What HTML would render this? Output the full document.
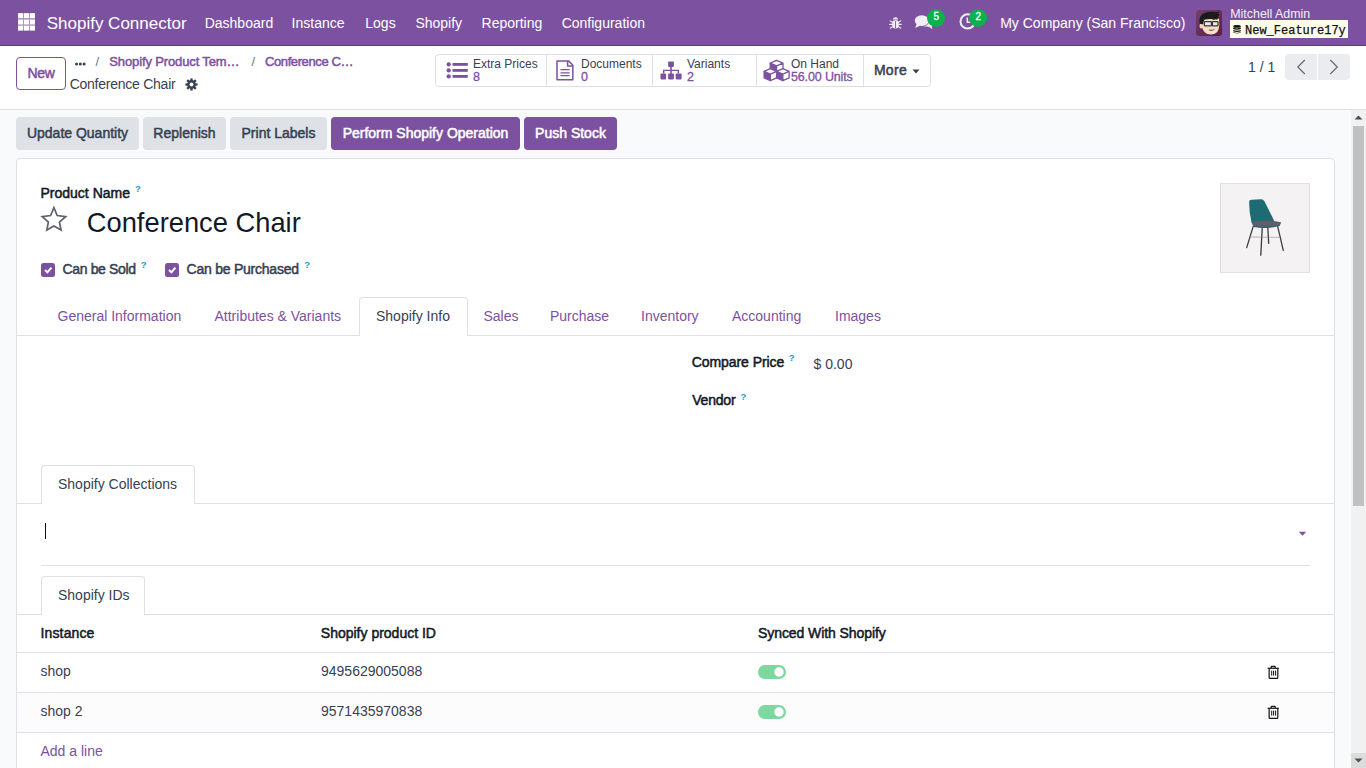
<!DOCTYPE html>
<html><head><meta charset="utf-8">
<style>
*{box-sizing:border-box;margin:0;padding:0}
html,body{width:1366px;height:768px;overflow:hidden;background:#fff;font-family:"Liberation Sans",sans-serif;color:#374151}
.t{position:absolute;line-height:1;white-space:nowrap}
.b{font-weight:bold}
.m{-webkit-text-stroke:0.5px currentColor}
.nav{position:absolute;left:0;top:0;width:1366px;height:46px;background:#7c52a0}
.nav .t{color:#fff}
.cp{position:absolute;left:0;top:46px;width:1366px;height:64px;background:#fff;border-bottom:1px solid #dde1e6}
.content{position:absolute;left:0;top:110px;width:1366px;height:658px;overflow:hidden;background:#f9fafb}
.inner{position:relative;width:1351px;height:1088px}
.pu{color:#7c52a0}
.sup{position:absolute;font-size:9.5px;font-weight:bold;line-height:1;color:#1f96c8}
.btn2{position:absolute;top:7px;height:33px;border-radius:4px;background:#dee2e6}
.btn1{position:absolute;top:7px;height:33px;border-radius:4px;background:#7c52a0}
.card{position:absolute;left:16px;top:48px;width:1319px;height:1100px;background:#fff;border:1px solid #dde1e6;border-radius:4px}
.hl{position:absolute;height:1px;background:#dde1e6}
.vl{position:absolute;width:1px;background:#dde1e6}
</style></head><body>

<!-- NAVBAR -->
<div class="nav">
  <svg style="position:absolute;left:18px;top:13px" width="17" height="18" viewBox="0 0 17 18">
    <rect x="0" y="0.2" width="17" height="17.3" fill="#fff" fill-opacity="0.4"/>
    <g fill="#fff">
      <rect x="0" y="0.2" width="5" height="4.8"/><rect x="6" y="0.2" width="5" height="4.8"/><rect x="12" y="0.2" width="5" height="4.8"/>
      <rect x="0" y="6.6" width="5" height="4.8"/><rect x="6" y="6.6" width="5" height="4.8"/><rect x="12" y="6.6" width="5" height="4.8"/>
      <rect x="0" y="12.8" width="5" height="4.7"/><rect x="6" y="12.8" width="5" height="4.7"/><rect x="12" y="12.8" width="5" height="4.7"/>
    </g>
  </svg>
  <div style="position:absolute;left:0;top:45px;width:1366px;height:1px;background:#603c80"></div>
  <div class="t" style="left:46.7px;top:15px;font-size:17px">Shopify Connector</div>
  <div class="t" style="left:204.7px;top:16.3px;font-size:14px">Dashboard</div>
  <div class="t" style="left:291.6px;top:16.3px;font-size:14px">Instance</div>
  <div class="t" style="left:365.3px;top:16.3px;font-size:14px">Logs</div>
  <div class="t" style="left:415.4px;top:16.3px;font-size:14px">Shopify</div>
  <div class="t" style="left:481.6px;top:16.3px;font-size:14px">Reporting</div>
  <div class="t" style="left:561.7px;top:16.3px;font-size:14px">Configuration</div>
  <svg style="position:absolute;left:888px;top:15px" width="15" height="15" viewBox="0 0 15 15">
    <g fill="#f3eef6">
      <path d="M5 4.6 A2.5 2.3 0 0 1 10 4.6 Z"/>
      <rect x="4.3" y="5.2" width="6.4" height="8.2" rx="2.4"/>
    </g>
    <g stroke="#f3eef6" stroke-width="1.1" fill="none" stroke-linecap="round">
      <path d="M4.4 7.2 L2.2 5.9 M4.3 9.4 H1.8 M4.5 11.6 L2.3 13.2 M10.6 7.2 L12.8 5.9 M10.7 9.4 H13.2 M10.5 11.6 L12.7 13.2"/>
    </g>
    <rect x="7.05" y="6.2" width="0.9" height="7" fill="#7c52a0"/>
  </svg>
  <svg style="position:absolute;left:914px;top:13px" width="20" height="18" viewBox="0 0 20 18">
    <path d="M13 13.5 C15.6 14 17.5 15.5 18.5 16.5 C18 15.2 17.8 14.2 17.9 13.4 C19.1 12.6 19.7 11.6 19.7 10.5 C19.7 8.6 17.7 7 15 6.6 C15.2 7.1 15.3 7.6 15.3 8.1 C15.3 10.8 12.6 13 9 13.5 Z" fill="#ece6f0"/>
    <ellipse cx="7.8" cy="7.6" rx="7" ry="5.3" fill="#f3eef6"/>
    <path d="M2.8 10.5 L1.2 15 L6.5 12.5 Z" fill="#f3eef6"/>
  </svg>
  <div style="position:absolute;left:927px;top:9px;width:18px;height:18px;border-radius:9px;background:#0ab14c"></div>
  <div class="t m" style="left:927.3px;top:12px;width:18px;text-align:center;font-size:10px;color:#fff;-webkit-text-stroke:0.3px #fff">5</div>
  <svg style="position:absolute;left:957px;top:13px" width="20" height="19" viewBox="0 0 20 19">
    <circle cx="10.6" cy="8.45" r="7.1" fill="none" stroke="#f3eef6" stroke-width="2"/>
    <path d="M10.3 4.6 V9.2 H13.5" fill="none" stroke="#f3eef6" stroke-width="1.5"/>
  </svg>
  <div style="position:absolute;left:969px;top:9px;width:18px;height:18px;border-radius:9px;background:#0ab14c"></div>
  <div class="t m" style="left:969.3px;top:12px;width:18px;text-align:center;font-size:10px;color:#fff;-webkit-text-stroke:0.3px #fff">2</div>
  <div class="t" style="left:1000.2px;top:16.3px;font-size:14px">My Company (San Francisco)</div>
  <svg style="position:absolute;left:1196px;top:10px" width="26" height="26" viewBox="0 0 26 26">
    <defs><linearGradient id="avg" x1="0" y1="0" x2="1" y2="1"><stop offset="0" stop-color="#74416b"/><stop offset="1" stop-color="#561e43"/></linearGradient></defs>
    <rect width="26" height="26" rx="3" fill="url(#avg)"/>
    <ellipse cx="5.3" cy="16" rx="1.8" ry="2.5" fill="#f3d2bb"/>
    <path d="M5.5 10 Q5 24.8 15.5 24.6 Q23 24.2 23.3 15 L23 8.5 Q14 7 5.5 10 Z" fill="#f7dcc6"/>
    <path d="M3.6 13.5 Q2.6 5 8.5 3 Q14 1.2 20 2.2 L23.3 1.6 L22 3.8 L23.6 5 L21.8 6.6 L22.6 8 L21.2 9.6 Q15 8.6 8.5 9.6 Q7.4 11.5 7.2 14.5 Z" fill="#1b1b1b"/>
    <rect x="8.4" y="11.6" width="7" height="4.2" rx="0.6" fill="#eceae8" stroke="#3b3b3b" stroke-width="1.3"/>
    <rect x="16.4" y="11.6" width="5.6" height="4.2" rx="0.6" fill="#eceae8" stroke="#3b3b3b" stroke-width="1.3"/>
    <path d="M16.6 9.3 H18.8" stroke="#2a2a2a" stroke-width="0.9"/>
    <path d="M13 19.6 Q15.6 21.2 18.2 19.4" stroke="#6e5d5f" stroke-width="1.1" fill="none"/>
  </svg>
  <div class="t" style="left:1230.3px;top:8px;font-size:12.4px;color:#f4eff7">Mitchell Admin</div>
  <div style="position:absolute;left:1230px;top:20px;width:118px;height:18px;background:#fdfde9"></div>
  <svg style="position:absolute;left:1233px;top:24.5px" width="8" height="9" viewBox="0 0 8 9">
    <g fill="#111">
      <ellipse cx="4" cy="1.4" rx="3.8" ry="1.3"/>
      <path d="M0.2 2.6 Q4 4.2 7.8 2.6 V4 Q4 5.6 0.2 4 Z"/>
      <path d="M0.2 4.9 Q4 6.5 7.8 4.9 V6.3 Q4 7.9 0.2 6.3 Z"/>
      <path d="M0.2 7.1 Q4 8.7 7.8 7.1 V7.6 Q4 9.2 0.2 7.6 Z"/>
    </g>
  </svg>
  <div class="t" style="left:1245px;top:24.6px;font-size:12px;font-family:'Liberation Mono',monospace;color:#111;-webkit-text-stroke:0.25px #111">New_Feature17y</div>
</div>

<!-- CONTROL PANEL -->
<div class="cp">
  <div style="position:absolute;left:16px;top:11px;width:50px;height:33px;border:1px solid #7c52a0;border-radius:4px"></div>
  <div class="t m pu" style="left:16px;top:19.85px;width:50px;text-align:center;font-size:14px;letter-spacing:-0.4px">New</div>
  <svg style="position:absolute;left:75px;top:16px" width="11" height="4" viewBox="0 0 11 4"><g fill="#374151"><circle cx="1.5" cy="2" r="1.5"/><circle cx="5.3" cy="2" r="1.5"/><circle cx="9.1" cy="2" r="1.5"/></g></svg>
  <div class="t" style="left:95.5px;top:8.6px;font-size:13px;color:#6b7280">/</div>
  <div class="t m pu" style="left:109.3px;top:8.6px;font-size:13px;letter-spacing:-0.13px">Shopify Product Tem…</div>
  <div class="t" style="left:251.5px;top:8.6px;font-size:13px;color:#6b7280">/</div>
  <div class="t m pu" style="left:265px;top:8.6px;font-size:13px;letter-spacing:-0.4px">Conference C…</div>
  <div class="t" style="left:69.7px;top:31.15px;font-size:14px;letter-spacing:-0.25px;color:#374151">Conference Chair</div>
  <svg style="position:absolute;left:185px;top:31.9px" width="13" height="13" viewBox="-6.5 -6.5 13 13">
    <g fill="#374151">
      <rect x="-1.15" y="-6.1" width="2.3" height="12.2"/>
      <rect x="-1.15" y="-6.1" width="2.3" height="12.2" transform="rotate(45)"/>
      <rect x="-1.15" y="-6.1" width="2.3" height="12.2" transform="rotate(90)"/>
      <rect x="-1.15" y="-6.1" width="2.3" height="12.2" transform="rotate(135)"/>
      <circle r="4.4"/>
    </g>
    <circle r="1.9" fill="#fff"/>
  </svg>
  <!-- stat buttons -->
  <div style="position:absolute;left:435px;top:8px;width:496px;height:33px;border:1px solid #dde1e6;border-radius:4px"></div>
  <div class="vl" style="left:546px;top:9px;height:31px"></div>
  <div class="vl" style="left:652px;top:9px;height:31px"></div>
  <div class="vl" style="left:756px;top:9px;height:31px"></div>
  <div class="vl" style="left:863px;top:9px;height:31px"></div>
  <svg style="position:absolute;left:440px;top:9px" width="40" height="30" viewBox="0 0 40 30">
    <g fill="#7c52a0">
      <circle cx="8.7" cy="9.4" r="2.15"/><circle cx="8.7" cy="15.4" r="2.15"/><circle cx="8.7" cy="21.4" r="2.15"/>
      <rect x="12.5" y="8" width="15.3" height="2.8"/><rect x="12.5" y="14" width="15.3" height="2.8"/><rect x="12.5" y="20" width="15.3" height="2.8"/>
    </g>
  </svg>
  <div class="t" style="left:473px;top:11.9px;font-size:12px;color:#374151">Extra Prices</div>
  <div class="t m pu" style="left:473px;top:25.4px;font-size:12.5px;-webkit-text-stroke:0.3px currentColor">8</div>
  <svg style="position:absolute;left:550px;top:9px" width="40" height="30" viewBox="0 0 40 30">
    <g fill="none" stroke="#7c52a0" stroke-width="1.5" stroke-linejoin="round">
      <path d="M7 5.9 H18.6 L22.85 10.2 V24.85 H7 Z"/>
      <path d="M17.6 5.9 V10.9 H22.85"/>
      <path d="M10.5 14.6 H19.7 M10.5 17.8 H19.7 M10.5 20.7 H19.7" stroke-width="1.2"/>
    </g>
  </svg>
  <div class="t" style="left:581px;top:11.9px;font-size:12px;color:#374151">Documents</div>
  <div class="t m pu" style="left:581px;top:25.4px;font-size:12.5px;-webkit-text-stroke:0.3px currentColor">0</div>
  <svg style="position:absolute;left:655px;top:9px" width="40" height="30" viewBox="0 0 40 30">
    <g fill="#7c52a0">
      <rect x="13.1" y="6.4" width="5.8" height="5.5" rx="0.8"/>
      <rect x="15.2" y="11" width="1.6" height="8"/>
      <path d="M8 14.8 H24 V18.6 H22.6 V16.1 H9.4 V18.6 H8 Z"/>
      <rect x="5.5" y="18.4" width="5.6" height="6" rx="0.8"/>
      <rect x="13.1" y="18.4" width="5.8" height="6" rx="0.8"/>
      <rect x="20.7" y="18.4" width="5.9" height="6" rx="0.8"/>
    </g>
  </svg>
  <div class="t" style="left:687px;top:11.9px;font-size:12px;color:#374151">Variants</div>
  <div class="t m pu" style="left:687px;top:25.4px;font-size:12.5px;-webkit-text-stroke:0.3px currentColor">2</div>
  <svg style="position:absolute;left:760px;top:9px" width="40" height="30" viewBox="0 0 40 30">
    <g stroke="#7c52a0" stroke-width="1.3" stroke-linejoin="round">
      <path d="M10.2 8.1 L16.6 10.9 V17.3 L10.2 14.5 Z" fill="#7c52a0"/>
      <path d="M16.6 5.3 L23 8.1 L16.6 10.9 L10.2 8.1 Z M16.6 10.9 L23 8.1 V14.5 L16.6 17.3 Z" fill="#fff"/>
      <path d="M4.1 16.4 L10.35 19.2 V25.6 L4.1 22.8 Z" fill="#7c52a0"/>
      <path d="M10.35 13.6 L16.6 16.4 L10.35 19.2 L4.1 16.4 Z M10.35 19.2 L16.6 16.4 V22.8 L10.35 25.6 Z" fill="#fff"/>
      <path d="M16.6 16.4 L22.85 19.2 V25.6 L16.6 22.8 Z" fill="#7c52a0"/>
      <path d="M22.85 13.6 L29.1 16.4 L22.85 19.2 L16.6 16.4 Z M22.85 19.2 L29.1 16.4 V22.8 L22.85 25.6 Z" fill="#fff"/>
    </g>
  </svg>
  <div class="t" style="left:791px;top:11.9px;font-size:12px;color:#374151">On Hand</div>
  <div class="t m pu" style="left:791px;top:25.4px;font-size:12.5px;-webkit-text-stroke:0.3px currentColor;letter-spacing:-0.14px">56.00 Units</div>
  <div class="t m" style="left:873.9px;top:17.15px;font-size:14px;letter-spacing:0.3px;color:#374151">More</div>
  <svg style="position:absolute;left:912px;top:23px" width="8" height="5" viewBox="0 0 8 5"><path d="M0.5 0.5 H7.5 L4 4.5 Z" fill="#374151"/></svg>
  <!-- pager -->
  <div class="t" style="left:1248px;top:14.2px;font-size:14px;color:#374151">1 / 1</div>
  <div style="position:absolute;left:1285px;top:8px;width:65px;height:26px;border-radius:4px;background:#eaecef"></div>
  <div style="position:absolute;left:1317px;top:8px;width:1px;height:26px;background:#fff"></div>
  <svg style="position:absolute;left:1285px;top:8px" width="65" height="26" viewBox="0 0 65 26">
    <path d="M19.8 6 L12.8 13 L19.8 20 M45.3 6 L52.3 13 L45.3 20" fill="none" stroke="#666a73" stroke-width="1.2"/>
  </svg>
</div>

<!-- CONTENT -->
<div class="content"><div class="inner">
  <div class="btn2" style="left:16px;width:123px"></div>
  <div class="t m" style="left:16px;width:123px;top:16.25px;text-align:center;font-size:14px;color:#374151">Update Quantity</div>
  <div class="btn2" style="left:143px;width:83px"></div>
  <div class="t m" style="left:143px;width:83px;top:16.25px;text-align:center;font-size:14px;color:#374151">Replenish</div>
  <div class="btn2" style="left:230px;width:97px"></div>
  <div class="t m" style="left:230px;width:97px;top:16.25px;text-align:center;font-size:14px;color:#374151">Print Labels</div>
  <div class="btn1" style="left:331px;width:189px"></div>
  <div class="t m" style="left:331px;width:189px;top:16.25px;text-align:center;font-size:14px;color:#fff">Perform Shopify Operation</div>
  <div class="btn1" style="left:524px;width:93px"></div>
  <div class="t m" style="left:524px;width:93px;top:16.25px;text-align:center;font-size:14px;color:#fff">Push Stock</div>

  <div class="card" style="height:1030px"></div>

  <div class="t m" style="left:40.5px;top:76.05px;font-size:14px;color:#111827">Product Name</div>
  <div class="sup" style="left:135.0px;top:74.2px">?</div>
  <svg style="position:absolute;left:36px;top:92px" width="36" height="34" viewBox="36 202 36 34">
    <path d="M53.9 207.6 L57.2 215.5 L65.7 216.7 L59.4 222 L61.1 230 L53.9 225.9 L46.8 230 L48.4 222 L42.2 216.7 L50.6 215.5 Z" fill="none" stroke="#5f636f" stroke-width="1.7" stroke-linejoin="miter"/>
  </svg>
  <div class="t" style="left:86.8px;top:98.6px;font-size:27.3px;color:#111827">Conference Chair</div>

  <svg style="position:absolute;left:41px;top:153px" width="14" height="14" viewBox="0 0 14 14">
    <rect x="0" y="0" width="14" height="14" rx="2.5" fill="#7c52a0"/>
    <path d="M4 7.1 L6.4 9.3 L10.4 4.6" fill="none" stroke="#fff" stroke-width="2"/>
  </svg>
  <div class="t m" style="left:62.5px;top:152.45px;font-size:14px;letter-spacing:-0.35px;color:#374151">Can be Sold</div>
  <div class="sup" style="left:140.7px;top:150.0px">?</div>
  <svg style="position:absolute;left:165px;top:153px" width="14" height="14" viewBox="0 0 14 14">
    <rect x="0" y="0" width="14" height="14" rx="2.5" fill="#7c52a0"/>
    <path d="M4 7.1 L6.4 9.3 L10.4 4.6" fill="none" stroke="#fff" stroke-width="2"/>
  </svg>
  <div class="t m" style="left:186.5px;top:152.45px;font-size:14px;letter-spacing:-0.23px;color:#374151">Can be Purchased</div>
  <div class="sup" style="left:304.2px;top:150.0px">?</div>

  <div style="position:absolute;left:1220px;top:73px;width:90px;height:90px;border:1px solid #dde1e6;background:#f4f2f3"></div>
  <svg style="position:absolute;left:1221px;top:74px" width="88" height="88" viewBox="1221 184 88 88">
    <g stroke="#3d3a3c" stroke-width="1.3" stroke-linecap="round">
      <path d="M1253.3 226.1 L1246.7 247.6"/><path d="M1262.2 228.4 L1260.8 255.1"/><path d="M1267.8 227.5 L1268.7 243.4"/><path d="M1277.6 226.1 L1283.3 250.4"/>
      <path d="M1250.5 237 L1279 237.3" stroke-width="0.6" stroke="#8a8688"/>
    </g>
    <path d="M1249.1 202 Q1249.1 199.8 1251.5 199.7 L1261.2 199.3 Q1263.4 199.3 1264.4 201.2 Q1269 210 1274.4 221.5 L1251.6 223 Q1249.1 212 1249.1 202 Z" fill="#1e6b74"/>
    <path d="M1251.8 222.6 Q1266 219.8 1281 222.6 L1279.6 226 Q1266 229.4 1253.8 227 Z" fill="#1e6670"/>
    <path d="M1251.9 222 Q1266 219.4 1280.9 222.2 Q1280 225.2 1278 225.6 Q1266 227.6 1253.7 225.8 Q1251.9 224.4 1251.9 222 Z" fill="#615d68"/>
  </svg>

  <div class="hl" style="left:17px;top:225px;width:1317px"></div>
  <div style="position:absolute;left:359px;top:187px;width:109px;height:39px;background:#fff;border:1px solid #dde1e6;border-bottom:none;border-radius:4px 4px 0 0"></div>
  <div class="t pu" style="left:57.5px;top:198.85px;font-size:14px">General Information</div>
  <div class="t pu" style="left:214.5px;top:198.85px;font-size:14px">Attributes &amp; Variants</div>
  <div class="t" style="left:376px;top:198.85px;font-size:14px;color:#374151">Shopify Info</div>
  <div class="t pu" style="left:483.5px;top:198.85px;font-size:14px">Sales</div>
  <div class="t pu" style="left:550px;top:198.85px;font-size:14px">Purchase</div>
  <div class="t pu" style="left:641px;top:198.85px;font-size:14px">Inventory</div>
  <div class="t pu" style="left:732px;top:198.85px;font-size:14px">Accounting</div>
  <div class="t pu" style="left:835px;top:198.85px;font-size:14px">Images</div>

  <div class="t m" style="left:691.8px;top:245.15px;font-size:14px;letter-spacing:-0.08px;color:#111827">Compare Price</div>
  <div class="sup" style="left:788.7px;top:242.7px">?</div>
  <div class="t" style="left:813.5px;top:246.55px;font-size:14px;color:#374151">$ 0.00</div>
  <div class="t m" style="left:692.2px;top:283.45px;font-size:14px;letter-spacing:-0.2px;color:#111827">Vendor</div>
  <div class="sup" style="left:740.5px;top:281.5px">?</div>

  <div class="hl" style="left:17px;top:393px;width:1317px"></div>
  <div style="position:absolute;left:41px;top:355px;width:154px;height:39px;background:#fff;border:1px solid #dde1e6;border-bottom:none;border-radius:4px 4px 0 0"></div>
  <div class="t" style="left:58px;top:367.15px;font-size:14px;color:#374151">Shopify Collections</div>
  <div style="position:absolute;left:45px;top:413px;width:1px;height:16px;background:#111"></div>
  <div class="hl" style="left:41px;top:455px;width:1269px"></div>
  <svg style="position:absolute;left:1297.6px;top:421px" width="9" height="6" viewBox="0 0 9 6"><path d="M0.8 0.8 H8.2 L4.5 4.8 Z" fill="#7c52a0"/></svg>

  <div class="hl" style="left:17px;top:504px;width:1317px"></div>
  <div style="position:absolute;left:41px;top:466px;width:104px;height:39px;background:#fff;border:1px solid #dde1e6;border-bottom:none;border-radius:4px 4px 0 0"></div>
  <div class="t" style="left:58px;top:478px;font-size:14px;color:#374151">Shopify IDs</div>

  <div class="t m" style="left:40.5px;top:515.95px;font-size:14px;letter-spacing:0.14px;color:#111827">Instance</div>
  <div class="t m" style="left:320.8px;top:515.95px;font-size:14px;color:#111827">Shopify product ID</div>
  <div class="t m" style="left:758px;top:515.95px;font-size:14px;letter-spacing:-0.08px;color:#111827">Synced With Shopify</div>
  <div class="hl" style="left:17px;top:542px;width:1317px"></div>
  <div class="t" style="left:40.5px;top:553.85px;font-size:14px;color:#374151">shop</div>
  <div class="t" style="left:321px;top:553.85px;font-size:14px;color:#374151">9495629005088</div>
  <div class="hl" style="left:17px;top:582px;width:1317px"></div>
  <div style="position:absolute;left:17px;top:583px;width:1317px;height:39px;background:#fcfcfc"></div>
  <div class="t" style="left:40.5px;top:594.25px;font-size:14px;color:#374151">shop 2</div>
  <div class="t" style="left:321px;top:594.25px;font-size:14px;color:#374151">9571435970838</div>
  <div class="hl" style="left:17px;top:622px;width:1317px"></div>
  <div class="t pu" style="left:40.5px;top:634.25px;font-size:14px">Add a line</div>

  <svg style="position:absolute;left:758px;top:555px" width="28" height="14" viewBox="0 0 28 14"><rect width="28" height="14" rx="7" fill="#7dd8a0"/><circle cx="21" cy="7" r="4.7" fill="#fff"/></svg>
  <svg style="position:absolute;left:758px;top:595px" width="28" height="14" viewBox="0 0 28 14"><rect width="28" height="14" rx="7" fill="#7dd8a0"/><circle cx="21" cy="7" r="4.7" fill="#fff"/></svg>
  <svg style="position:absolute;left:1266px;top:555px" width="14" height="15" viewBox="0 0 14 15">
    <g fill="none" stroke="#111" stroke-width="1.2">
      <path d="M1.6 3.3 H12.8"/><path d="M5.2 3.1 V1.9 Q5.2 1.3 5.8 1.3 H8.6 Q9.2 1.3 9.2 1.9 V3.1"/>
      <path d="M3.15 3.6 V12.4 Q3.15 13.3 4 13.3 H10.9 Q11.8 13.3 11.8 12.4 V3.6"/>
      <path d="M5.7 5.6 V10.6 M7.6 5.6 V10.6 M9.6 5.6 V10.6" stroke-width="1"/>
    </g>
  </svg>
  <svg style="position:absolute;left:1266px;top:595px" width="14" height="15" viewBox="0 0 14 15">
    <g fill="none" stroke="#111" stroke-width="1.2">
      <path d="M1.6 3.3 H12.8"/><path d="M5.2 3.1 V1.9 Q5.2 1.3 5.8 1.3 H8.6 Q9.2 1.3 9.2 1.9 V3.1"/>
      <path d="M3.15 3.6 V12.4 Q3.15 13.3 4 13.3 H10.9 Q11.8 13.3 11.8 12.4 V3.6"/>
      <path d="M5.7 5.6 V10.6 M7.6 5.6 V10.6 M9.6 5.6 V10.6" stroke-width="1"/>
    </g>
  </svg>
</div></div>
<!-- scrollbar -->
<div style="position:absolute;left:1351px;top:110px;width:15px;height:658px;background:#f1f1f1"></div>
<div style="position:absolute;left:1353px;top:126px;width:11px;height:380px;background:#c1c1c1"></div>
<svg style="position:absolute;left:1351px;top:110px" width="15" height="15" viewBox="0 0 15 15"><path d="M3.5 9.5 H11.5 L7.5 5.5 Z" fill="#505050"/></svg>
<div style="position:absolute;left:1351px;top:753px;width:15px;height:15px;background:#dcdcdc"></div>
<svg style="position:absolute;left:1351px;top:753px" width="15" height="15" viewBox="0 0 15 15"><path d="M3.5 5.5 H11.5 L7.5 9.5 Z" fill="#505050"/></svg>

</body></html>
